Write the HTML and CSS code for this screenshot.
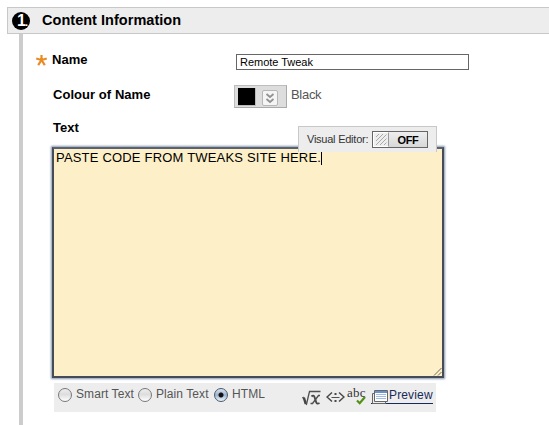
FILE: index.html
```html
<!DOCTYPE html>
<html lang="en">
<head>
<meta charset="utf-8">
<title>Content Information</title>
<link rel="stylesheet" href="styles.css">
</head>
<body>
<header class="step-header">
  <span class="step-number">1<span class="step-dot">.</span></span>
  <h1 class="step-title">Content Information</h1>
</header>
<main class="step-body">
  <div class="row row-name">
    <svg class="required" width="11" height="11" viewBox="0 0 11 11"><path d="M5.500 5.500V0M5.500 5L.2 3.500M5.500 5L10.800 3.500M5.500 5L2.200 10.200M5.500 5L8.800 10.200" fill="none" stroke="#e98b23" stroke-width="2.200"/></svg>
    <span class="label label-name">Name</span>
    <span class="name-input">Remote Tweak</span>
  </div>
  <div class="row row-colour">
    <span class="label label-colour">Colour of Name</span>
    <span class="picker">
      <span class="swatch"></span>
      <span class="chevrons"><svg width="14" height="14" viewBox="0 0 14 14"><path d="M3.500 3L7 6L10.500 3M3.500 8L7 11L10.500 8" fill="none" stroke="#929292" stroke-width="1.800"/></svg></span>
    </span>
    <span class="colour-name">Black</span>
  </div>
  <div class="row row-text"><span class="label label-text">Text</span></div>
  <div class="editor">
    <div class="editor-area"><span class="editor-text">PASTE CODE FROM TWEAKS SITE HERE.</span><span class="caret"></span>
      <svg class="grip" width="9" height="9" viewBox="0 0 9 9"><path d="M1 8.500L8.500 1M5 8.500L8.500 5" fill="none" stroke="#6d6b60"/></svg>
    </div>
    <div class="visual-toggle">
      <span class="toggle-label">Visual Editor:</span>
      <span class="toggle"><span class="toggle-knob"><svg width="12" height="13" viewBox="0 0 12 13"><path d="M1 4L4 1M1 8L8 1M1 12L11.500 1.500M5 12L11.500 5.500M9 12L11.500 9.500" fill="none" stroke="#a0a0a0" stroke-width=".9"/></svg></span><span class="toggle-state">OFF</span></span>
    </div>
  </div>
  <div class="toolbar">
    <span class="radio"></span><span class="option option-smart">Smart Text</span>
    <span class="radio"></span><span class="option option-plain">Plain Text</span>
    <span class="radio radio-on"></span><span class="option option-html">HTML</span>
    <svg class="icon-root" width="19" height="16" viewBox="0 0 19 16">
      <path d="M0 8L2 7" fill="none" stroke="#555"/><path d="M1.800 7.500L3.800 14" fill="none" stroke="#444" stroke-width="2.500"/><path d="M4.300 15L7.500 1.500H18.500" fill="none" stroke="#505050" stroke-width="1.300"/>
      <path d="M9.500 6.500Q11.500 4.500 12.500 7L14.300 12.500Q15 14.500 17.500 13" fill="none" stroke="#484848" stroke-width="1.900"/><path d="M18 5.500H16.500L10.500 13.500H8.500" fill="none" stroke="#505050" stroke-width="1.400"/>
    </svg>
    <svg class="icon-code" width="19" height="12" viewBox="0 0 19 12"><path d="M6 1.500L1 6L6 10.500M13 1.500L18 6L13 10.500" fill="none" stroke="#484848" stroke-width="1.500"/><path d="M5.500 6.500H13.500" fill="none" stroke="#505050"/><path d="M8.500 2h2v2h-2zM8.500 9h2v2h-2z" fill="#484848"/></svg>
    <span class="spell">abc<svg class="spell-check" width="10" height="9" viewBox="0 0 10 9"><path d="M1 4.500L3.700 7.200L9 1" fill="none" stroke="#519015" stroke-width="2.200"/></svg></span>
    <span class="preview"><svg class="icon-preview" width="17" height="14" viewBox="0 0 17 14"><path d="M3 3.500H.5V13.500H13.500V11" fill="#eee" stroke="#666"/><path d="M2.500 .5H15.500V11.500H2.500Z" fill="#fff" stroke="#666"/><path d="M3 1H15V3H3Z" fill="#6792d0"/><path d="M4 4.500H14M4 6.500H14M4 8.500H14" stroke="#a0bce4"/></svg><span class="preview-text">Preview</span></span>
  </div>
</main>
</body>
</html>
```
FILE: styles.css
```css
* { box-sizing: border-box; }
body {
  margin: 0;
  height: 425px;
  padding: 7px 0 0 7px;
  overflow: hidden;
  background: #fff;
  color: #000;
  font-family: "Liberation Sans", Arial, sans-serif;
  font-size: 13px;
  white-space: nowrap;
}
.step-header {
  display: flex;
  align-items: center;
  height: 27px;
  padding-left: 4px;
  background: #ededed;
  border: 1px solid #c8c8c8;
  border-right: 0;
}
.step-number {
  display: flex;
  width: 18px;
  height: 18px;
  border-radius: 50%;
  background: #000;
  color: #fff;
  font: bold 16px/18px "Liberation Sans", Arial, sans-serif;
  padding-left: 5px;
}
.step-dot { font-size: 11px; line-height: 20px; margin-left: -1px; }
.step-title { margin: -1px 0 0 12px; font-size: 14.5px; line-height: 18px; letter-spacing: .03px; }
.step-body {
  height: 391px;
  margin-left: 12px;
  padding-left: 30px;
  border-left: 4px solid #ccc;
}
.row { display: flex; align-items: flex-start; }
.label { font-weight: bold; line-height: 15px; letter-spacing: .05px; }
.row-name { height: 51px; padding-top: 18px; margin-left: -17px; }
.required { margin-top: 3px; }
.label-name { width: 189px; padding-left: 5px; }
.name-input {
  width: 233px;
  height: 16px;
  margin-top: 2px;
  padding-left: 3px;
  border: 1px solid #666;
  font-size: 11px;
  line-height: 15px;
  letter-spacing: -.02px;
}
.row-colour { height: 36px; }
.label-colour { width: 181px; padding-top: 2px; }
.picker {
  display: flex;
  width: 53px;
  height: 23px;
  padding: 2px 0 0 3px;
  border: 1px solid #bdbdbd;
  border-right-color: #aaa;
  border-bottom-color: #aaa;
  background: #ddd;
}
.swatch { width: 18px; height: 18px; background: #000; border: 1px solid #bbb; border-width: 0 1px 1px 0; }
.chevrons { width: 16px; height: 16px; margin: 2px 0 0 6px; background: #f5f5f5; border: 1px solid #b7b7b7; border-radius: 2px; }
.chevrons svg { display: block; }
.colour-name { margin-left: 4px; padding-top: 2px; line-height: 15px; letter-spacing: -.3px; color: #555; }
.row-text { height: 26px; }
.label-text { margin-top: -1px; }
.editor { position: relative; width: 392px; height: 231px; margin-left: -1px; }
.editor-area {
  display: flex;
  height: 231px;
  padding: 1px 0 0 2px;
  border: 2px solid #454c58;
  border-top-color: #5a6170;
  background: #fdefc8;
  box-shadow: 0 0 2px 1px #8797ac;
}
.editor-text { line-height: 16px; letter-spacing: .19px; }
.caret { width: 1px; height: 14px; margin-top: 1px; background: #000; }
.grip { position: absolute; right: 2px; bottom: 2px; }
.visual-toggle {
  position: absolute;
  left: 246px;
  top: -21px;
  display: flex;
  width: 139px;
  height: 26px;
  padding: 4px 0 0 8px;
  border: 1px solid #c8c8c8;
  border-bottom: 0;
  background: #ededed;
}
.toggle-label { width: 65px; color: #333; font-size: 11px; line-height: 16px; letter-spacing: -.24px; }
.toggle { display: flex; width: 56px; height: 17px; border: 1px solid #666; background: linear-gradient(#eee, #d8d8d8); }
.toggle-knob {
  width: 16px;
  padding-left: 1px;
  border: 1px solid #fff;
  border-right-color: #999;
  background: #eee;
}
.toggle-knob svg { display: block; }
.toggle-state { flex: 1; text-align: center; font-weight: bold; font-size: 11px; line-height: 16px; letter-spacing: -.4px; }
.toolbar {
  display: flex;
  width: 382px;
  height: 29px;
  margin: 5px 0 0 1px;
  padding: 4px 0 0 4px;
  background: #ededed;
  color: #555;
  font-size: 12px;
}
.radio {
  width: 14px;
  height: 14px;
  margin-top: 1px;
  flex: none;
  border: 1px solid #777;
  border-radius: 50%;
  background: linear-gradient(#eee, #ddd 45%, #fff);
}
.radio-on { background: radial-gradient(circle at center, #111 0 2px, transparent 3px), linear-gradient(#d8e4f3, #9db4ce 50%, #edf7ff); border-color: #4c5969; }
.option { flex: none; line-height: 15px; padding-left: 4px; letter-spacing: .08px; }
.option-smart { width: 66px; }
.option-plain { width: 62px; }
.option-html { width: 74px; }
.icon-root { margin-top: 3px; flex: none; }
.icon-code { margin: 4px 0 0 5px; flex: none; }
.spell { position: relative; width: 20px; margin-left: 2px; color: #333; font: 13px/12px "Liberation Serif", serif; letter-spacing: .3px; }
.spell-check { position: absolute; left: 9px; top: 9px; }
.preview { display: flex; height: 16px; margin: 1px 0 0 4px; color: #162b58; line-height: 15px; border-bottom: 1px solid #162b58; }
.preview-text { letter-spacing: .15px; }
.icon-preview { margin: 2px 0 0 1px; overflow: visible; }
```
